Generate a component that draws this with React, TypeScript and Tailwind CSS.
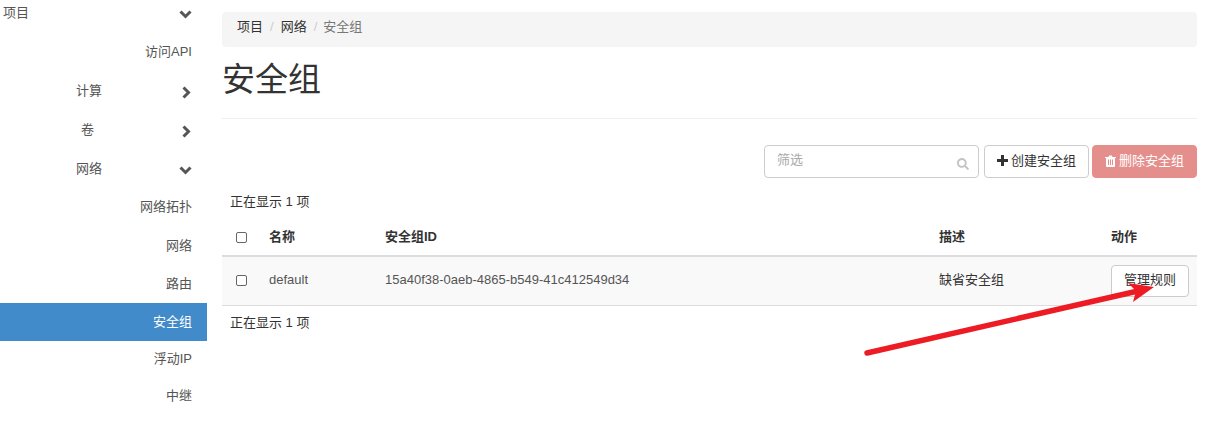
import { FaSearch } from "react-icons/fa";

const FONT = { fontFamily: '"Liberation Sans", "Noto Sans CJK SC", sans-serif' };

const ChevronDown = () => (
  <svg width="13" height="9" viewBox="0 0 13 9" className="mt-[3px]">
    <path d="M1.5 1.5 L6.5 6.5 L11.5 1.5" fill="none" stroke="#555555" strokeWidth="3" />
  </svg>
);

const ChevronRight = () => (
  <svg width="9" height="13" viewBox="0 0 9 13" className="mt-[3px] mr-[1px]">
    <path d="M1.5 1.5 L6.5 6.5 L1.5 11.5" fill="none" stroke="#555555" strokeWidth="3" />
  </svg>
);

const PlusIcon = () => (
  <svg width="11" height="11" viewBox="0 0 11 11">
    <path d="M4 0 H7 V4 H11 V7 H7 V11 H4 V7 H0 V4 H4 Z" fill="#333333" />
  </svg>
);

const TrashIcon = () => (
  <svg width="11" height="12" viewBox="0 0 11 12">
    <path
      d="M3.5 2 L4.2 .5 H6.8 L7.5 2 H11 V3 H10 V11 Q10 12 9 12 H2 Q1 12 1 11 V3 H0 V2 Z M3 4.5 V10 H4 V4.5 Z M5 4.5 V10 H6 V4.5 Z M7 4.5 V10 H8 V4.5 Z"
      fill="#ffffff"
      fillRule="evenodd"
    />
  </svg>
);

const SubItem = ({ label, active, tall }: { label: string; active?: boolean; tall?: boolean }) => (
  <div
    className={`${tall ? "h-[39px]" : "h-[38px]"} flex items-center justify-end pr-[15px] text-[13px] ${
      active ? "bg-[#428bca] text-white" : "text-[#555555]"
    }`}
  >
    {label}
  </div>
);

const GroupItem = ({ label, left, open }: { label: string; left: string; open?: boolean }) => (
  <div className={`h-[39px] flex items-center justify-between pr-[15px] text-[13px] text-[#555555] ${left}`}>
    <span>{label}</span>
    {open ? <ChevronDown /> : <ChevronRight />}
  </div>
);

const Sidebar = () => (
  <div className="w-[207px] shrink-0 -mt-[7px]">
    <GroupItem label="项目" left="pl-[3px]" open />
    <SubItem label="访问API" tall />
    <GroupItem label="计算" left="pl-[76px]" />
    <GroupItem label="卷" left="pl-[81px]" />
    <GroupItem label="网络" left="pl-[76px]" open />
    <SubItem label="网络拓扑" />
    <SubItem label="网络" tall />
    <SubItem label="路由" />
    <SubItem label="安全组" active />
    <div className="h-[36px] flex items-center justify-end pr-[15px] text-[#555555]">浮动IP</div>
    <SubItem label="中继" />
  </div>
);

const CheckBox = () => (
  <span className="block w-[11px] h-[11px] mx-auto rounded-[2px] border border-[#666666] bg-white" />
);

const App = () => {
  return (
    <div className="relative w-[1207px] h-[421px] overflow-hidden bg-white flex text-[13px] text-[#333333]" style={FONT}>
      <Sidebar />
      <main className="flex-1 ml-[15px] mr-[10px] pt-[12px]">
        <div className="h-[35px] flex items-center gap-[5px] px-[15px] pb-[5px] bg-[#f5f5f5] rounded-[4px] text-[13px]">
          <span>项目</span>
          <span className="text-[#cccccc] px-[2px]">/</span>
          <span>网络</span>
          <span className="text-[#cccccc] pl-[2px] pr-[1px]">/</span>
          <span className="text-[#777777]">安全组</span>
        </div>

        <h1 className="mt-[12px] h-[42px] leading-[42px] text-[33px] font-normal">安全组</h1>
        <div className="mt-[17px] border-t border-[#eeeeee]" />

        <div className="mt-[26px] flex justify-end h-[33px]">
          <div className="w-[215px] flex items-center justify-between pl-[12px] pr-[9px] border border-[#cccccc] rounded-[4px] text-[#aaaaaa]">
            <span className="-mt-[3px]">筛选</span>
            <FaSearch className="text-[12px] text-[#c4c4c4] mt-[4px]" />
          </div>
          <button className="ml-[5px] w-[105px] flex items-center justify-center gap-[3px] pb-[2px] border border-[#cccccc] rounded-[4px] bg-white">
            <PlusIcon />
            创建安全组
          </button>
          <button className="ml-[3px] w-[105px] flex items-center justify-center gap-[3px] pb-[2px] border border-[#e58e8c] rounded-[4px] bg-[#e58f8d] text-white">
            <TrashIcon />
            删除安全组
          </button>
        </div>

        <div className="mt-[14px] h-[19px] leading-[19px] pl-[8px]">正在显示 1 项</div>

        <table className="mt-[8px] w-full table-fixed border-collapse">
          <colgroup>
            <col className="w-[39px]" />
            <col className="w-[116px]" />
            <col className="w-[554px]" />
            <col className="w-[172px]" />
            <col />
          </colgroup>
          <thead>
            <tr className="h-[37px] border-b-2 border-[#dddddd] text-left">
              <th><CheckBox /></th>
              <th className="px-[8px] pb-[1px] font-bold">名称</th>
              <th className="px-[8px] pb-[1px] font-bold">安全组ID</th>
              <th className="px-[8px] pb-[1px] font-bold">描述</th>
              <th className="px-[8px] pb-[1px] font-bold">动作</th>
            </tr>
          </thead>
          <tbody>
            <tr className="h-[49px] bg-[#f9f9f9] border-b border-[#dddddd]">
              <td><CheckBox /></td>
              <td className="px-[8px] pb-[2px] text-[#555555]">default</td>
              <td className="px-[8px] pb-[2px] text-[#555555]">15a40f38-0aeb-4865-b549-41c412549d34</td>
              <td className="px-[8px] pb-[2px]">缺省安全组</td>
              <td className="px-[8px] whitespace-nowrap">
                <button className="w-[78px] h-[32px] pb-[2px] border border-[#cccccc] rounded-[4px] bg-white text-[13px]">管理规则</button>
              </td>
            </tr>
          </tbody>
        </table>

        <div className="mt-[7px] h-[19px] leading-[19px] pl-[8px]">正在显示 1 项</div>
      </main>

      {/* red annotation arrow drawn over the page */}
      <svg className="absolute left-0 top-0 pointer-events-none" width="1207" height="421" viewBox="0 0 1207 421">
        <path d="M867 353 L1138 291" stroke="#ed1c24" strokeWidth="5.5" strokeLinecap="round" fill="none" />
        <path d="M1154 287 L1133 302 L1136 291 L1128 283 Z" fill="#ed1c24" />
      </svg>
    </div>
  );
};

export default App;
